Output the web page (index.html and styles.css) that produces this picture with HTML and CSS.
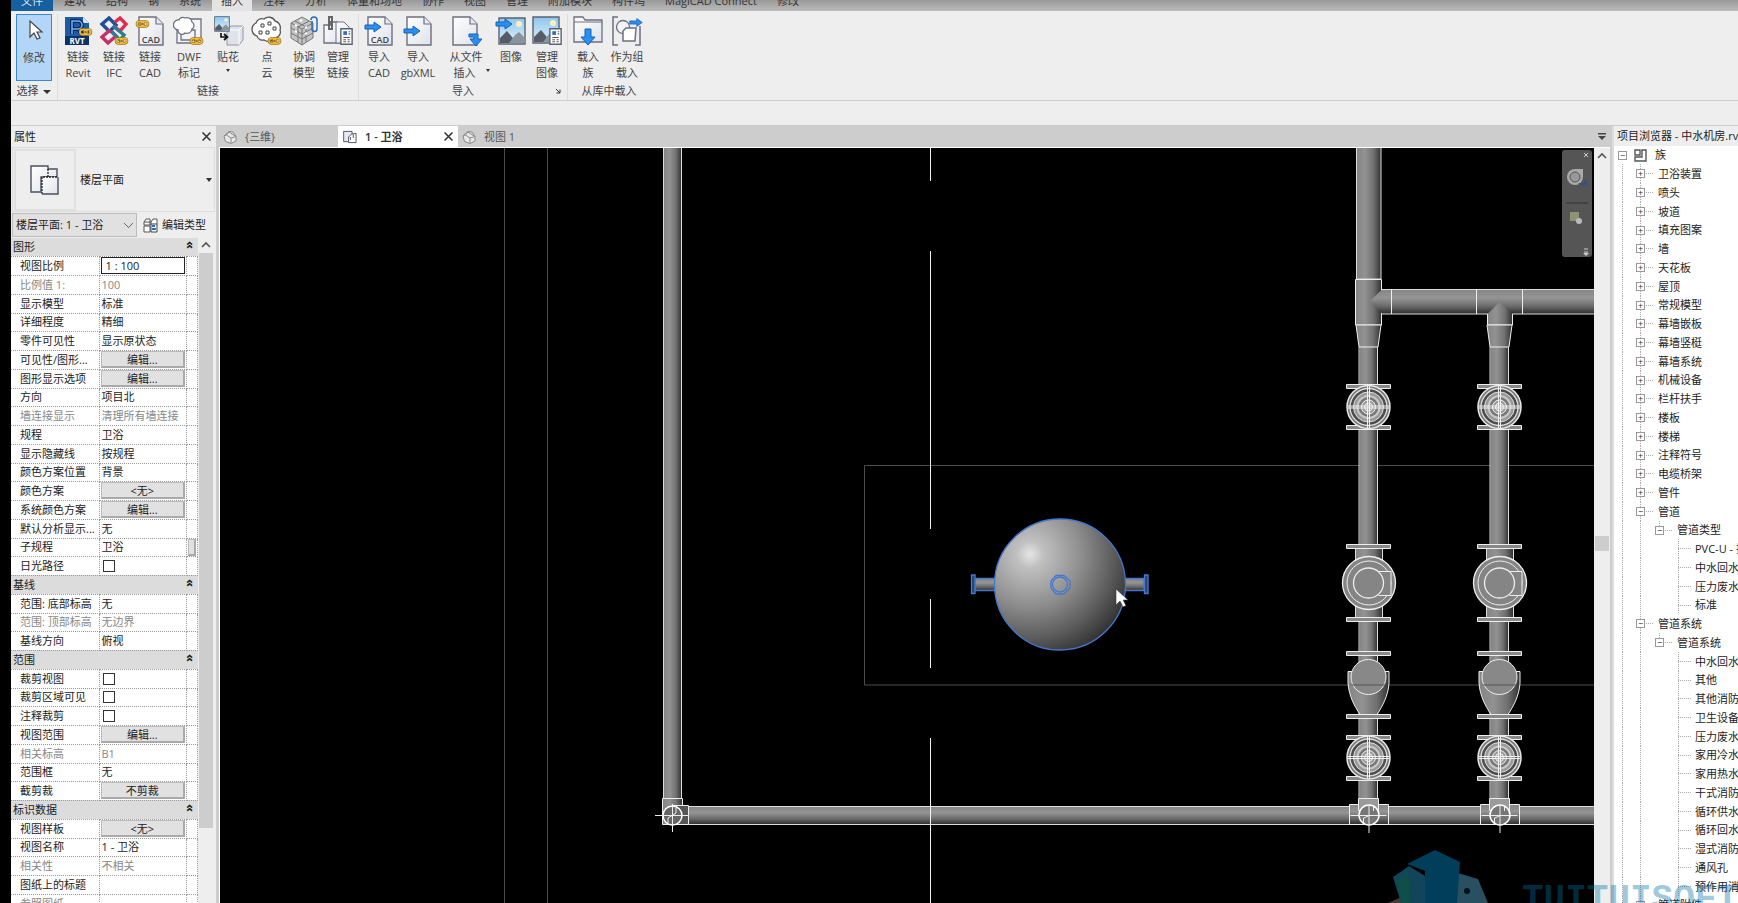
FILE: index.html
```html
<!DOCTYPE html>
<html lang="zh-CN">
<head>
<meta charset="utf-8">
<title>1 - 卫浴</title>
<link rel="stylesheet" href="styles.css">
</head>
<body>
<svg class="defs" aria-hidden="true">
  <defs>
    <linearGradient id="paper" x1="0" y1="0" x2="1" y2="1"><stop offset="0" stop-color="#fff"/><stop offset="1" stop-color="#dfe2ea"/></linearGradient>
    <linearGradient id="sky" x1="0" y1="0" x2="0" y2="1"><stop offset="0" stop-color="#8cc6ee"/><stop offset="1" stop-color="#e4f2fa"/></linearGradient>
    <linearGradient id="pv"><stop offset="0" stop-color="#848484"/><stop offset=".35" stop-color="#929292"/><stop offset=".7" stop-color="#707070"/><stop offset="1" stop-color="#303030"/></linearGradient>
    <linearGradient id="ph" x1="0" y1="0" x2="0" y2="1"><stop offset="0" stop-color="#868686"/><stop offset=".35" stop-color="#949494"/><stop offset=".7" stop-color="#686868"/><stop offset="1" stop-color="#2c2c2c"/></linearGradient>
    <radialGradient id="ball" cx=".27" cy=".27" r=".85"><stop offset="0" stop-color="#e6e6e6"/><stop offset=".12" stop-color="#c0c0c0"/><stop offset=".45" stop-color="#909090"/><stop offset=".75" stop-color="#5c5c5c"/><stop offset="1" stop-color="#2c2c2c"/></radialGradient>
    <symbol id="chain" viewBox="0 0 14 8"><g fill="none"><path d="M4 1.5h2a2.5 2.5 0 0 1 0 5H4a2.5 2.5 0 0 1 0-5zM8.500 1.500h1.500a2.500 2.500 0 0 1 0 5H8.500a2.500 2.500 0 0 1 0-5z" stroke="#8a6412" stroke-width="2.6"/><path d="M4 1.500h2a2.500 2.500 0 0 1 0 5H4a2.500 2.500 0 0 1 0-5zM8.500 1.500h1.500a2.500 2.500 0 0 1 0 5H8.500a2.500 2.500 0 0 1 0-5z" stroke="#f3bb3a" stroke-width="1.500"/><path d="M5 4h4" stroke="#8a6412"/></g></symbol>
    <symbol id="page" viewBox="0 0 26 30"><path d="M1 1h17l7 7v21H1z" fill="url(#paper)" stroke="#6c7080" stroke-width="1.400"/><path d="M18 1v7h7" fill="#e8eaf0" stroke="#6c7080" stroke-width="1.200"/></symbol>
    <symbol id="arrow" viewBox="0 0 18 12"><path d="M1 4h9V1l7 5-7 5V8H1z" fill="#2a90f0" stroke="#1461b8"/></symbol>
    <symbol id="photo" viewBox="0 0 28 28"><path d="M1 1h26v26H1z" fill="url(#sky)" stroke="#5a6272" stroke-width="1.400"/><circle cx="21" cy="7" r="3" fill="#fff0c0"/><path d="M2 21l7-7 10 12H2z" fill="#555c66"/><path d="M11 26l6-8 4-3 6 6v5z" fill="#8b939c"/></symbol>
    <symbol id="sheet" viewBox="0 0 12 16"><path d="M.7.700h10.600v14.600H.700z" fill="#fff" stroke="#5c6070" stroke-width="1.300"/><path d="M3 3h3.500v3.500H3z" fill="#2a6ec4"/><path d="M8 3.500h1.500M8 5.500h1.500M3 9h6M3 11h2.500M3 13h2.500M7 11h2M7 13h2" stroke="#555"/></symbol>
    <symbol id="house" viewBox="0 0 14 14"><path d="M1 6l5-4.500 4 .5 3 4.500v4.500l-5 2.500-5.500-2z" fill="#e8e8e8" stroke="#8a8a8a"/><path d="M1 6l2.500-1 4.500 3v5M8 8l5-1.500M3.500 5L6 2l6 4" fill="none" stroke="#8a8a8a"/></symbol>
    <symbol id="plan" viewBox="0 0 30 30"><path d="M1 1h17v3h9v8H11v15H1z" fill="url(#paper)" stroke="#4a5060" stroke-width="1.400"/><path d="M12 12h16v17H12z" fill="url(#paper)"/><path d="M18 4v8M12 29V12h16" fill="none" stroke="#222" stroke-dasharray="2 1" stroke-width="1.300"/><path d="M28 12v17H12" fill="none" stroke="#4a5060" stroke-width="1.400"/></symbol>
  </defs>
</svg>

<div class="app">
  <nav class="tabs">
    <button class="tab file">文件</button><button class="tab">建筑</button><button class="tab">结构</button><button class="tab">钢</button><button class="tab">系统</button><button class="tab on">插入</button><button class="tab">注释</button><button class="tab">分析</button><button class="tab">体量和场地</button><button class="tab">协作</button><button class="tab">视图</button><button class="tab">管理</button><button class="tab">附加模块</button><button class="tab">构件坞</button><button class="tab">MagiCAD Connect</button><button class="tab">修改</button>
  </nav>

  <section class="ribbon">
    <div class="group first">
      <div class="tools"><button class="tool modify"><svg viewBox="0 0 32 30"><path d="M12 4v16l4-4 3 6 3-1-3-6h5z" fill="#fff" stroke="#444" stroke-width="1.200"/></svg>修改</button></div>
      <button class="caption">选择 <span class="tri"></span></button>
    </div>
    <div class="group">
      <div class="tools">
        <button class="tool"><svg viewBox="0 0 32 30"><path d="M3 1h18l6 6v22H3z" fill="#1d5ba6"/><path d="M21 1v6h6" fill="#d5e4f4"/><path d="M10 18V5h6a4 4 0 0 1 0 8h-6m6 0l4 5" fill="none" stroke="#0b2c60" stroke-width="4"/><path d="M10 18V5h6a4 4 0 0 1 0 8h-6" fill="none" stroke="#76b0ea" stroke-width="1.500"/><path d="M3 20h24v9H3z" fill="#0d3268"/><text x="15" y="28" class="rvt">RVT</text><use href="#chain" x="16" y="12" width="15" height="8"/></svg>链接<br>Revit</button>
        <button class="tool"><svg viewBox="0 0 32 30"><g fill="none" stroke-width="3.400"><path d="M10 14L4 8l7-6 7 7-7 7" stroke="#1f4f94"/><path d="M17 6l5-4 6 6-6 7-6-5" stroke="#e02c50"/><path d="M12 14l-8 7 6 6 8-7-5-5" stroke="#c92c66"/><path d="M15 10l11 9-4 5-8-8" stroke="#2a7f96"/></g><use href="#chain" x="16" y="21" width="15" height="8"/></svg>链接<br>IFC</button>
        <button class="tool"><svg viewBox="0 0 32 30"><use href="#page" x="4" y="0" width="26" height="30"/><text x="17" y="27" class="cad">CAD</text><use href="#chain" x="1" y="4" width="15" height="8"/></svg>链接<br>CAD</button>
        <button class="tool wide"><svg viewBox="0 0 32 30"><path d="M8 3h20v21H8zM4 14h18v13H4z" fill="#f4f5f8" stroke="#6c7080" stroke-width="1.300"/><path d="M6 4a4 4 0 0 1 6-2 5 5 0 0 1 7 4 4 4 0 0 1 0 7 5 5 0 0 1-7 4 4 4 0 0 1-7-3 5 5 0 0 1 1-10z" fill="#fff" stroke="#6c7080" stroke-width="1.300"/><use href="#chain" x="16" y="21" width="15" height="8"/></svg>DWF<br>标记</button>
        <button class="tool"><svg viewBox="0 0 32 30"><path d="M15 14l4-4h12v14l-4 5H15z" fill="#dfe2ea" stroke="#9296a4"/><path d="M15 14h12l4-4M27 14v15" fill="none" stroke="#fff"/><use href="#photo" x="2" y="0" width="16" height="16"/><path d="M9 17v4h6m-3-3l3.500 3-3.500 3" fill="none" stroke="#111" stroke-width="1.700"/></svg>贴花<span class="tri small"></span></button>
        <button class="tool wide"><svg viewBox="0 0 32 30"><path d="M5 7a6 6 0 0 1 8-4 7 7 0 0 1 11 2 7 7 0 0 1 5 9 6 6 0 0 1-5 8 8 8 0 0 1-11 2 6 6 0 0 1-7-4 7 7 0 0 1-1-13z" fill="#fff" stroke="#555" stroke-width="1.300"/><path d="M10 8h3v3h-3zM17 6h3v3h-3zM22 11h3v3h-3zM8 15h3v3H8zM15 15h3v3h-3z" fill="#fff" stroke="#444"/><use href="#chain" x="16" y="21" width="15" height="8"/></svg>点<br>云</button>
        <button class="tool narrow"><svg viewBox="0 0 32 30"><path d="M3 7l11-6 11 6v15l-11 7-11-7z" fill="#c4c4c4" stroke="#777"/><path d="M3 7l11 6 11-6M14 13v16M7 5l11 6v15M21 5l-11 6v15M3 12l11 6 11-6M3 17l11 6 11-6" fill="none" stroke="#777"/><path d="M7 9l2 1M17 12l2-1M7 15l2 1M17 18l2-1M12 4l2 1" stroke="#fff" stroke-width="2"/><path d="M24 5v8a2 2 0 0 0 5 0V4a3 3 0 0 0-6 0" fill="none" stroke="#2c6db5" stroke-width="1.500"/></svg>协调<br>模型</button>
        <button class="tool"><svg viewBox="0 0 32 30"><path d="M2 9h8v-3h5l4 3v18H2z" fill="url(#paper)" stroke="#6c7080" stroke-width="1.300"/><path d="M14 6h8l5 5v16H14z" fill="url(#paper)" stroke="#6c7080"/><path d="M7 1h3v5H7zM7 8h3v5H7z" fill="none" stroke="#666" stroke-width="2"/><use href="#sheet" x="18" y="12" width="13" height="17"/></svg>管理<br>链接</button>
      </div>
      <div class="caption">链接</div>
    </div>
    <div class="group">
      <div class="tools">
        <button class="tool"><svg viewBox="0 0 32 30"><use href="#page" x="4" y="0" width="26" height="30"/><text x="17" y="27" class="cad">CAD</text><use href="#arrow" x="1" y="5" width="18" height="12"/></svg>导入<br>CAD</button>
        <button class="tool wide"><svg viewBox="0 0 32 30"><use href="#page" x="4" y="0" width="26" height="30"/><use href="#arrow" x="1" y="9" width="18" height="12"/></svg>导入<br>gbXML</button>
        <button class="tool xwide"><svg viewBox="0 0 32 30"><use href="#page" x="2" y="0" width="26" height="30"/><path d="M19 18h9v5h4l-6 7-6-7h4v-2h-5z" fill="#2a90f0" stroke="#1461b8"/></svg>从文件<br>插入 <span class="tri small side"></span></button>
        <button class="tool"><svg viewBox="0 0 32 30"><use href="#photo" x="3" y="1" width="28" height="28"/><use href="#arrow" x="0" y="2" width="18" height="12"/></svg>图像</button>
        <button class="tool"><svg viewBox="0 0 32 30"><use href="#photo" x="1" y="0" width="28" height="28"/><use href="#sheet" x="18" y="12" width="13" height="17"/></svg>管理<br>图像</button>
      </div>
      <div class="caption">导入<svg class="launch" viewBox="0 0 6 6"><path d="M1 1l4 4M5 1.500V5H1.500" fill="none" stroke="#333"/></svg></div>
    </div>
    <div class="group">
      <div class="tools">
        <button class="tool"><svg viewBox="0 0 32 30"><path d="M2 1h9l2 3h17v22H2z" fill="url(#paper)" stroke="#6c7080" stroke-width="1.300"/><path d="M2 6h28" stroke="#6c7080"/><path d="M13 13h6v8h4l-7 8-7-8h4z" fill="#2a90f0" stroke="#1461b8"/></svg>载入<br>族</button>
        <button class="tool wide"><svg viewBox="0 0 32 30"><path d="M7 1H2v28h5M24 29h5V10" fill="none" stroke="#6c7080" stroke-width="1.500"/><circle cx="12" cy="11" r="6.500" fill="#f2f3f6" stroke="#6c7080" stroke-width="1.300"/><path d="M15 12h10l-1 13H12V15z" fill="#fff" stroke="#6c7080" stroke-width="1.500"/><use href="#arrow" x="18" y="1" width="14" height="11"/></svg>作为组<br>载入</button>
      </div>
      <div class="caption">从库中载入</div>
    </div>
  </section>
  <div class="options"></div>

  <main class="work">
    <aside class="props">
      <header class="bar"><h2>属性</h2><button class="x" aria-label="关闭属性"><svg viewBox="0 0 8 8"><path d="M.500.500l7 7m0-7l-7 7"/></svg></button></header>
      <button class="type"><span class="thumb"><svg viewBox="0 0 30 30"><use href="#plan"/></svg></span><span>楼层平面</span><span class="tri end"></span></button>
      <div class="pick">
        <select aria-label="实例"><option>楼层平面: 1 - 卫浴</option></select>
        <button class="edit"><svg viewBox="0 0 16 15"><path d="M2 4l2-3h4v6H2zM9 4l2-3h4v5M9 7V4H2M2 8h6v6H2z" fill="#fff" stroke="#555"/><path d="M9 6h6v8H9z" fill="#fff" stroke="#444"/><path d="M10 8h3M10 11h4" stroke="#2a6ec4" stroke-width="2"/></svg>编辑类型</button>
      </div>
      <div class="scroller">
        <table class="grid">
          <colgroup><col class="c1"><col class="c2"><col class="c3"></colgroup>
          <tbody>
          <tr><th colspan="3">图形<i>»</i></th></tr>
          <tr><td>视图比例</td><td class="field"><input value="1 : 100" aria-label="视图比例"></td><td></td></tr>
          <tr class="dim"><td>比例值 1:</td><td>100</td><td></td></tr>
          <tr><td>显示模型</td><td>标准</td><td></td></tr>
          <tr><td>详细程度</td><td>精细</td><td></td></tr>
          <tr><td>零件可见性</td><td>显示原状态</td><td></td></tr>
          <tr><td>可见性/图形...</td><td class="field"><button>编辑...</button></td><td></td></tr>
          <tr><td>图形显示选项</td><td class="field"><button>编辑...</button></td><td></td></tr>
          <tr><td>方向</td><td>项目北</td><td></td></tr>
          <tr class="dim"><td>墙连接显示</td><td>清理所有墙连接</td><td></td></tr>
          <tr><td>规程</td><td>卫浴</td><td></td></tr>
          <tr><td>显示隐藏线</td><td>按规程</td><td></td></tr>
          <tr><td>颜色方案位置</td><td>背景</td><td></td></tr>
          <tr><td>颜色方案</td><td class="field"><button>&lt;无&gt;</button></td><td></td></tr>
          <tr><td>系统颜色方案</td><td class="field"><button>编辑...</button></td><td></td></tr>
          <tr><td>默认分析显示...</td><td>无</td><td></td></tr>
          <tr><td>子规程</td><td>卫浴</td><td class="field"><button aria-label="关联子规程"></button></td></tr>
          <tr><td><label for="sun">日光路径</label></td><td><input type="checkbox" id="sun"></td><td></td></tr>
          <tr><th colspan="3">基线<i>»</i></th></tr>
          <tr><td>范围: 底部标高</td><td>无</td><td></td></tr>
          <tr class="dim"><td>范围: 顶部标高</td><td>无边界</td><td></td></tr>
          <tr><td>基线方向</td><td>俯视</td><td></td></tr>
          <tr><th colspan="3">范围<i>»</i></th></tr>
          <tr><td><label for="crop">裁剪视图</label></td><td><input type="checkbox" id="crop"></td><td></td></tr>
          <tr><td><label for="cropv">裁剪区域可见</label></td><td><input type="checkbox" id="cropv"></td><td></td></tr>
          <tr><td><label for="anno">注释裁剪</label></td><td><input type="checkbox" id="anno"></td><td></td></tr>
          <tr><td>视图范围</td><td class="field"><button>编辑...</button></td><td></td></tr>
          <tr class="dim"><td>相关标高</td><td>B1</td><td></td></tr>
          <tr><td>范围框</td><td>无</td><td></td></tr>
          <tr><td>截剪裁</td><td class="field"><button>不剪裁</button></td><td></td></tr>
          <tr><th colspan="3">标识数据<i>»</i></th></tr>
          <tr><td>视图样板</td><td class="field"><button>&lt;无&gt;</button></td><td></td></tr>
          <tr><td>视图名称</td><td>1 - 卫浴</td><td></td></tr>
          <tr class="dim"><td>相关性</td><td>不相关</td><td></td></tr>
          <tr><td>图纸上的标题</td><td></td><td></td></tr>
          <tr class="dim"><td>参照图纸</td><td></td><td></td></tr>
          </tbody>
        </table>
        <div class="vbar"><svg viewBox="0 0 14 15"><path d="M3 9l4-4 4 4"/></svg><span class="thumbbar"></span></div>
      </div>
    </aside>

    <section class="view">
      <div class="viewtabs">
        <button class="vt"><svg viewBox="0 0 14 14"><use href="#house"/></svg>{三维}</button>
        <div class="vt on"><svg viewBox="0 0 15 14"><path d="M.700 1h9v11h-9z" fill="#e6e9f0" stroke="#4a5060"/><path d="M6 13V7l3-3 5-1v10z" fill="#fff" stroke="#4a5060"/><path d="M8 7v3m3-6v4" stroke="#4a5060"/></svg><span>1 - 卫浴</span><button class="x" aria-label="关闭视图"><svg viewBox="0 0 8 8"><path d="M.500.500l7 7m0-7l-7 7"/></svg></button></div>
        <button class="vt"><svg viewBox="0 0 14 14"><use href="#house"/></svg>视图 1</button>
        <button class="more" aria-label="视图列表"><svg viewBox="0 0 8 7"><path d="M0 0h8v1.500H0zM0 3h8L4 7z" fill="#444"/></svg></button>
      </div>
      <div class="stage">
        <svg class="model" viewBox="221 147 1374 755" preserveAspectRatio="xMinYMin slice">
          <defs>
            <g id="flange"><path d="M-22 .500h44v4h-44z" fill="#888" stroke="#eee"/></g>
            <g id="wheel">
              <circle r="21.500" fill="#777" stroke="#e8e8e8" stroke-width="1.500"/><circle r="18.500" fill="#4c4c4c" stroke="#ddd" stroke-width="1.300"/>
              <circle r="15" fill="#999" stroke="#ddd"/><circle r="11" fill="#777" stroke="#c8c8c8" stroke-width="2"/><circle r="7" fill="#999" stroke="#f4f4f4"/><circle r="4" fill="#aaa" stroke="#eee"/>
              <path d="M-21-1h42M-21 1h42M-1-21v42M1-21v42" stroke="#f0f0f0"/>
            </g>
            <g id="train">
              <path d="M-9 346H9v451H-9z" fill="url(#pv)"/><path d="M-9.500 346v451M9 346v451" stroke="#ddd" fill="none"/>
              <path d="M-12.500 324h25l-3 22h-19z" fill="url(#pv)" stroke="#eee"/>
              <use href="#flange" y="383"/><use href="#flange" y="424"/><use href="#wheel" y="406"/>
              <path d="M-13 547h27v70h-27z" fill="url(#pv)" stroke="#ddd"/>
              <use href="#flange" y="543"/><use href="#flange" y="616"/>
              <circle cx=".500" cy="582" r="26.500" fill="#848484" stroke="#f0f0f0" stroke-width="1.300"/><circle cx=".500" cy="582" r="22" fill="none" stroke="#eee"/><path d="M10 570.500h12.500v24H10" fill="#848484" stroke="#eee"/><circle cy="582" r="15" fill="#858585" stroke="#eee" stroke-width="1.300"/>
              <use href="#flange" y="650"/>
              <path d="M-20.500 670.500h41v12c-1 12-6 22-12 31h-17c-6-9-11-19-12-31z" fill="url(#pv)" stroke="#f0f0f0"/>
              <circle cy="676" r="17.500" fill="#888" stroke="#eee"/><path d="M-17 684h34" stroke="#555"/>
              <use href="#flange" y="713"/><use href="#flange" y="734"/><use href="#flange" y="775"/><use href="#wheel" y="756.500"/>
              <path d="M-19 803.500h39v20h-39z" fill="url(#ph)" stroke="#f0f0f0"/><path d="M-10 797.500h20v12h-20z" fill="#9a9a9a" stroke="#eee"/>
              <circle cx=".500" cy="814" r="10" fill="#777" stroke="#fff" stroke-width="1.500"/><path d="M-18 814.500h36M.500 804v28M-5 822v-5l5-2M5 806v4" stroke="#eee" fill="none"/>
            </g>
          </defs>
          <path d="M505.500 147v760M548.500 147v760" stroke="#4a4a4a"/>
          <path d="M1600 464.500H865.500v219.500H1600" fill="none" stroke="#4c4c4c"/>
          <path d="M664.500 146h18v652h-18z" fill="url(#pv)" stroke="#ddd"/>
          <path d="M689 805.500h912v18H689z" fill="url(#ph)" stroke="#ddd"/>
          <path d="M663.500 797.500h20v26h-20z" fill="url(#pv)" stroke="#eee"/><path d="M674 804.500h15.500v19H674z" fill="#555" stroke="#eee"/>
          <circle cx="673.500" cy="814.500" r="9.500" fill="#666" stroke="#fff" stroke-width="1.500"/><path d="M656 814.500h34M673.500 803v28M669 822v-5l8-5v-5" fill="none" stroke="#eee"/>
          <path d="M931.500 147v33M931.500 250v278M931.500 598v69M931.500 737v170" stroke="#f4f4f4"/>
          <g stroke="#4478d0" stroke-width="1.300"><path d="M976 577.500h21v12h-21zM1126 577.500h19v12h-19z" fill="url(#ph)"/><path d="M972.500 574h3.500v18.500h-3.500zM1145.500 574h3.500v18.500h-3.500z" fill="#27446e"/><circle cx="1061" cy="583.500" r="65.500" fill="url(#ball)"/><path d="M1057 574.500h8l6 5.500v7l-6 6h-8l-5-6v-7z" fill="none"/><circle cx="1061" cy="583.500" r="7.500" fill="none"/></g>
          <path d="M1117 588v16l4-4 3 6 3-1.500-3-5.500h5z" fill="#fff" stroke="#333" stroke-width=".6"/>
          <path d="M1357.500 146h24.500v132h-24.500z" fill="url(#pv)" stroke="#ddd"/>
          <path d="M1380 288.500h220v24.500h-220z" fill="url(#ph)" stroke="#ddd"/>
          <path d="M1356.500 278.500h26v45.500h-26z" fill="url(#pv)" stroke="#eee"/><path d="M1371 300l12-11.500v24z" fill="url(#ph)"/><path d="M1392.500 288v25M1477.500 288v25M1523.500 288v25" stroke="#eee"/>
          <path d="M1488.500 313l12-12 13 12v11h-25z" fill="url(#pv)"/><path d="M1488.500 313v11h25v-11" fill="none" stroke="#eee"/>
          <use href="#train" x="1369.500"/><use href="#train" x="1500.500"/>
        </svg>
        <div class="navbar"><svg viewBox="0 0 30 107"><path d="M22 3l4 4m0-4l-4 4M22 102h4M22 99h4" stroke="#ccc"/><path d="M5 27a8 8 0 0 1 8-8h8v8a8 8 0 0 1-16 0z" fill="#aaa"/><circle cx="13" cy="27" r="5" fill="#999" stroke="#555"/><path d="M16 33h6v-3h3v6h-5z" fill="#3c5078"/><path d="M4 53h22" stroke="#333"/><path d="M8 62h9v9H8z" fill="#8c9474"/><circle cx="17" cy="71" r="3" fill="#bbb"/><path d="M21 103h6l-3 3z" fill="#ccc"/></svg></div>
        <div class="vbar wide"><svg viewBox="0 0 14 15"><path d="M3 10l4-4 4 4"/></svg><span class="thumbbar"></span></div>
      </div>
    </section>

    <aside class="browser">
      <header class="bar"><h2>项目浏览器 - 中水机房.rvt</h2></header>
      <ul class="tree">
        <li class="l0"><button aria-label="折叠">−</button><svg viewBox="0 0 13 13"><path d="M1 1h5v5H1zM8 1h4v11H1V8h7z" fill="#fff" stroke="#555" stroke-width="1.400"/></svg>族</li>
        <li class="l1"><button aria-label="展开">+</button>卫浴装置</li>
        <li class="l1"><button aria-label="展开">+</button>喷头</li>
        <li class="l1"><button aria-label="展开">+</button>坡道</li>
        <li class="l1"><button aria-label="展开">+</button>填充图案</li>
        <li class="l1"><button aria-label="展开">+</button>墙</li>
        <li class="l1"><button aria-label="展开">+</button>天花板</li>
        <li class="l1"><button aria-label="展开">+</button>屋顶</li>
        <li class="l1"><button aria-label="展开">+</button>常规模型</li>
        <li class="l1"><button aria-label="展开">+</button>幕墙嵌板</li>
        <li class="l1"><button aria-label="展开">+</button>幕墙竖梃</li>
        <li class="l1"><button aria-label="展开">+</button>幕墙系统</li>
        <li class="l1"><button aria-label="展开">+</button>机械设备</li>
        <li class="l1"><button aria-label="展开">+</button>栏杆扶手</li>
        <li class="l1"><button aria-label="展开">+</button>楼板</li>
        <li class="l1"><button aria-label="展开">+</button>楼梯</li>
        <li class="l1"><button aria-label="展开">+</button>注释符号</li>
        <li class="l1"><button aria-label="展开">+</button>电缆桥架</li>
        <li class="l1"><button aria-label="展开">+</button>管件</li>
        <li class="l1"><button aria-label="折叠">−</button>管道</li>
        <li class="l2"><button aria-label="折叠">−</button>管道类型</li>
        <li class="l3">PVC-U - 排水</li>
        <li class="l3">中水回水</li>
        <li class="l3">压力废水</li>
        <li class="l3">标准</li>
        <li class="l1"><button aria-label="折叠">−</button>管道系统</li>
        <li class="l2"><button aria-label="折叠">−</button>管道系统</li>
        <li class="l3">中水回水</li>
        <li class="l3">其他</li>
        <li class="l3">其他消防</li>
        <li class="l3">卫生设备</li>
        <li class="l3">压力废水</li>
        <li class="l3">家用冷水</li>
        <li class="l3">家用热水</li>
        <li class="l3">干式消防</li>
        <li class="l3">循环供水</li>
        <li class="l3">循环回水</li>
        <li class="l3">湿式消防</li>
        <li class="l3">通风孔</li>
        <li class="l3">预作用消防</li>
        <li class="l1"><button aria-label="展开">+</button>管道附件</li>
      </ul>
    </aside>
  </main>
  <div class="mark">
    <svg viewBox="0 0 116 54"><path d="M4 54l16-7v7z" fill="#4a3a34"/><path d="M9 28l16-11 16 10v27H17z" fill="#12455a"/><path d="M14 32l10-10 2 32H18z" fill="#0e5048"/><path d="M74 24l20 6 10 24H66z" fill="#285060"/><path d="M23 15L51 1l25 12-3 41H41V22z" fill="#003e5c"/><circle cx="83" cy="42" r="3" fill="#001018"/></svg><span>.TUITUISOFT</span>
  </div>
</div>
</body>
</html>
```
FILE: styles.css
```css
* { box-sizing: border-box; }
body {
  margin: 0;
  background: #000;
  color: #222;
  font: 11px/16px "Open Sans", "Noto Sans CJK SC", sans-serif;
}
button, input, select { font: inherit; color: inherit; margin: 0; padding: 0; border: 0; background: none; border-radius: 0; }
h2 { margin: 0; font-size: 11px; font-weight: 400; }
.defs { position: absolute; width: 0; height: 0; }
.app { position: relative; display: flex; flex-direction: column; height: 100vh; margin-left: 11px; overflow: hidden; background: #eee; }

/* ribbon tabs */
.tabs { display: flex; align-items: flex-end; gap: 2px; height: 11px; flex: none; overflow: hidden; background: linear-gradient(#999, #bbb); }
.tab { flex: none; height: 20px; padding: 0 9px; line-height: 20px; color: #333; }
.tab.file { width: 42px; background: #16609f; color: #dce8f4; }
.tab.on { background: #e4e4e4; }

/* ribbon */
.ribbon { display: flex; flex: none; height: 90px; padding-top: 3px; border-bottom: 1px solid #ccc; }
.group { display: flex; flex-direction: column; padding: 0 2px; border-right: 1px solid #dcdcdc; }
.group:last-child { border-right: 0; }
.group.first { width: 47px; padding: 0 5px; }
.tools { display: flex; flex: 1; }
.tool { display: block; width: 36px; white-space: nowrap; text-align: center; vertical-align: top; align-self: flex-start; color: #444; }
.tool svg { display: block; width: 32px; height: 30px; margin: 2px auto 3px; }
.tool.narrow { width: 32px; }
.tool.wide { width: 42px; }
.tool.xwide { width: 54px; }
.tool.modify { height: 67px; border: 1px solid #3b87d8; background: #b4d6f6; padding-bottom: 16px; }
.caption { position: relative; height: 19px; line-height: 19px; text-align: center; white-space: nowrap; color: #444; }
.launch { position: absolute; right: 4px; top: 7px; width: 6px; height: 6px; }
.tri { display: inline-block; border: 4px solid transparent; border-top-color: #333; border-bottom: 0; vertical-align: middle; margin-left: 2px; }
.tri.small { display: block; width: 0; border-width: 3px 2px 0; margin: 4px auto; }
.tri.small.side { display: inline-block; margin: 0 -12px 8px 8px; }
.rvt { font: 700 8px "Open Sans", sans-serif; fill: #fff; text-anchor: middle; }
.cad { font: 600 9px "Open Sans", sans-serif; fill: #444; text-anchor: middle; }
.options { flex: none; height: 24px; }

.work { display: flex; flex: 1; min-height: 0; background: #cdcdcd; border-top: 1px solid #ccc; }
.bar { display: flex; align-items: center; justify-content: space-between; height: 21px; flex: none; padding: 0 5px 0 3px; white-space: nowrap; }
.x { width: 9px; height: 9px; }
.x svg { display: block; width: 9px; height: 9px; fill: none; stroke: #333; stroke-width: 1.4; }

/* properties */
.props { display: flex; flex-direction: column; width: 205px; flex: none; margin-right: 3px; background: #eee; }
.type { display: flex; align-items: center; gap: 4px; height: 65px; flex: none; margin: 0 1px; padding-left: 1px; border: 1px solid #ddd; text-align: left; }
.thumb { display: grid; place-items: center; width: 62px; height: 62px; border: 2px solid #e0e0e0; }
.thumb svg { width: 30px; height: 30px; }
.tri.end { margin: 0 2px 0 auto; border-width: 4px 3px 0; }
.pick { display: flex; align-items: center; gap: 5px; height: 26px; flex: none; padding-left: 1px; }
.pick select { appearance: none; width: 125px; height: 24px; padding-left: 3px; border: 1px solid #bbb; background: linear-gradient(45deg, transparent 44%, #666 44% 56%, transparent 56%) 111px 9px / 5px 5px no-repeat, linear-gradient(-45deg, transparent 44%, #666 44% 56%, transparent 56%) 115px 9px / 5px 5px no-repeat, #e1e1e1; }
.edit { display: flex; align-items: center; gap: 4px; white-space: nowrap; }
.edit svg { width: 16px; height: 15px; }
.scroller { display: flex; flex: 1; min-height: 0; overflow: hidden; }
.grid { width: 187px; border-collapse: collapse; table-layout: fixed; align-self: flex-start; background: #fff; }
.c1 { width: 88px; }
.c3 { width: 11px; }
.grid tr { height: 19px; }
.grid tr:nth-child(4n + 1) { height: 18px; }
.grid td { height: inherit; padding: 0 0 0 2px; line-height: 16px; border: 1px dotted #999; border-left: 0; white-space: nowrap; overflow: hidden; }
.grid td:first-child { padding-left: 9px; }
.grid td.field { padding: 0 1px 0 1px; }
.grid th { padding: 0 6px 0 2px; line-height: 16px; text-align: left; font-weight: 400; background: #dcdcdc; }
.grid i { float: right; font-style: normal; font-weight: 700; font-size: 13px; line-height: 12px; transform: rotate(-90deg); }
.dim { color: #888; }
.field button { display: block; width: 100%; height: 17px; line-height: 15px; background: #e1e1e1; border: 1px solid #bbb; border-right: 2px solid #aaa; border-bottom: 2px solid #aaa; }
.field input { display: block; width: 100%; height: 17px; padding-left: 4px; border: 1px solid #222; background: #fff; }
.grid input[type="checkbox"] { display: block; appearance: none; width: 12px; height: 12px; margin-left: 1px; border: 1px solid #333; background: #fff; }
.vbar { display: flex; flex-direction: column; width: 14px; margin-left: 1px; background: #eee; }
.vbar svg { width: 14px; height: 15px; fill: none; stroke: #555; stroke-width: 1.6; }
.thumbbar { height: 575px; background: #cdcdcd; }

/* drawing area */
.view { display: flex; flex-direction: column; flex: 1; min-width: 0; }
.viewtabs { display: flex; height: 21px; flex: none; }
.vt { display: flex; align-items: center; gap: 8px; width: 119px; padding: 0 4px; color: #555; white-space: nowrap; }
.vt > svg { width: 14px; height: 14px; flex: none; }
.vt.on { width: 120px; padding: 0 5px; background: #fff; color: #333; font-weight: 600; }
.vt .x { margin-left: auto; }
.more { margin-left: auto; padding: 0 4px; }
.more svg { display: block; width: 8px; height: 7px; }
.stage { position: relative; display: flex; flex: 1; min-height: 0; border: solid #fff; border-width: 1px 0 0 1px; background: #000; }
.model { flex: 1; min-width: 0; height: 100%; }
.navbar { position: absolute; right: 18px; top: 2px; width: 30px; height: 107px; border-radius: 3px; background: #555; }
.navbar svg { display: block; }
.vbar.wide { width: 16px; margin: 0; padding: 0 1px; }
.wide .thumbbar { height: 15px; margin-top: 373px; }

/* project browser */
.browser { display: flex; flex-direction: column; width: 126px; flex: none; margin-left: 2px; border-left: 2px solid #ddd; overflow: hidden; background: #fff; }
.browser .bar { height: 20px; background: #eee; }
.tree {
  --dots: repeating-linear-gradient(#aaa 0 1px, transparent 1px 2px);
  --dash: repeating-linear-gradient(90deg, #aaa 0 1px, transparent 1px 2px);
  list-style: none; margin: 0; padding: 0;
}
.tree li { display: flex; align-items: center; height: 19px; white-space: nowrap; background-repeat: no-repeat; }
.tree li:nth-child(4n + 1) { height: 18px; }
.tree button { flex: none; width: 9px; height: 9px; margin-right: 13px; border: 1px solid #999; background: #fff; line-height: 7px; font-size: 9px; color: #234; }
.tree .l0 { padding-left: 4px; }
.tree .l0 button { margin-right: 7px; }
.l0 svg { width: 13px; height: 13px; margin-right: 8px; }
.tree .l1 { padding-left: 22px; background-image: var(--dots), var(--dots), var(--dash); background-position: 8px 0, 26px 0, 26px 9px; background-size: 1px 100%, 1px 100%, 14px 1px; }
.tree .l2 { padding-left: 41px; background-image: var(--dots), var(--dots), var(--dots), var(--dash); background-position: 8px 0, 26px 0, 45px 0, 45px 9px; background-size: 1px 100%, 1px 100%, 1px 9px, 14px 1px; }
.tree .l3 { padding-left: 81px; background-image: var(--dots), var(--dots), var(--dots), var(--dash); background-position: 8px 0, 26px 0, 64px 0, 64px 9px; background-size: 1px 100%, 1px 100%, 1px 100%, 14px 1px; }

/* watermark over the lower right corner */
.mark { position: absolute; right: 0; bottom: 0; display: flex; height: 54px; overflow: hidden; pointer-events: none; }
.mark svg { width: 116px; height: 54px; flex: none; }
.mark span { margin-top: 33px; font: 700 36px/36px "Liberation Mono", monospace; color: rgba(0, 112, 165, .4); }
```
